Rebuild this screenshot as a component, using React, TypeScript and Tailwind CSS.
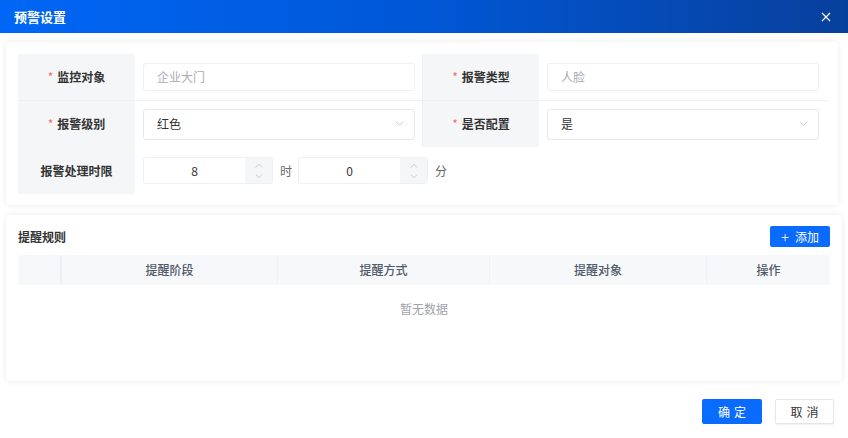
import React from 'react';

const font = { fontFamily: '"Noto Sans CJK SC", "Noto Sans", sans-serif' };

const Chevron: React.FC<{ up?: boolean; className?: string }> = ({ up, className }) => (
  <svg viewBox="0 0 10 6" className={className} fill="none" stroke="currentColor" strokeWidth="1">
    {up ? <path d="M1 5.5 L5 1.5 L9 5.5" /> : <path d="M1 0.5 L5 4.5 L9 0.5" />}
  </svg>
);

const Label: React.FC<{ text: string; required?: boolean; w?: string }> = ({ text, required, w = 'w-[117px]' }) => (
  <div className={`${w} shrink-0 h-full bg-[#f5f6f7] flex items-center justify-center text-[12px] font-bold text-[#333]`}>
    {required && <span className="text-[#f56c6c] mr-[4px] font-normal">*</span>}
    {text}
  </div>
);

const TextField: React.FC<{ value: string }> = ({ value }) => (
  <div className="w-[272px] h-[28px] border border-[#eef0f3] rounded-[3px] bg-white flex items-center pl-[13px] text-[12px] text-[#a8abb2]">
    {value}
  </div>
);

const SelectField: React.FC<{ value: string }> = ({ value }) => (
  <div className="w-[272px] h-[31px] border border-[#e6e8eb] rounded-[3px] bg-white flex items-center justify-between pl-[13px] pr-[10px] text-[12px] text-[#333]">
    <span>{value}</span>
    <Chevron className="w-[9px] h-[6px] text-[#c0c4cc]" />
  </div>
);

const NumberField: React.FC<{ value: string }> = ({ value }) => (
  <div className="flex h-[27px] border border-[#eef0f3] rounded-[3px] bg-white">
    <div className="w-[101px] flex items-center justify-center text-[12px] text-[#333]">{value}</div>
    <div className="w-[27px] bg-[#f5f6f7] flex flex-col items-center justify-center gap-[6px]">
      <Chevron up className="w-[8px] h-[5px] text-[#b8bcc4]" />
      <Chevron className="w-[8px] h-[5px] text-[#b8bcc4]" />
    </div>
  </div>
);

const App: React.FC = () => {
  return (
    <div className="w-[848px] h-[438px] bg-white flex flex-col" style={font}>
      {/* header */}
      <div className="h-[33px] shrink-0 bg-gradient-to-r from-[#0066f5] via-[#0057d6] to-[#07409c] flex items-center justify-between pl-[14px] pr-[17px]">
        <span className="text-[13px] font-bold text-white">预警设置</span>
        <svg viewBox="0 0 10 10" className="w-[10px] h-[10px]" stroke="white" strokeWidth="1.2">
          <path d="M1 1 L9 9 M9 1 L1 9" />
        </svg>
      </div>

      {/* form card */}
      <div className="mt-[9px] ml-[6px] w-[832px] h-[163px] bg-white rounded-[4px] shadow-[0_0_6px_rgba(0,0,0,0.09)] pt-[12px] pl-[12px]">
        <div className="w-[810px]">
          <div className="flex h-[47px] border-b border-[#eef0f3]">
            <div className="flex items-center w-[405px] border-r border-[#eef0f3]">
              <Label text="监控对象" required />
              <div className="px-[8px]"><TextField value="企业大门" /></div>
            </div>
            <div className="flex items-center w-[404px]">
              <Label text="报警类型" required w="w-[116px]" />
              <div className="px-[8px]"><TextField value="人脸" /></div>
            </div>
          </div>
          <div className="flex h-[46px]">
            <div className="flex items-center w-[405px] border-r border-[#eef0f3]">
              <Label text="报警级别" required />
              <div className="px-[8px]"><SelectField value="红色" /></div>
            </div>
            <div className="flex items-center w-[404px]">
              <Label text="是否配置" required w="w-[116px]" />
              <div className="px-[8px]"><SelectField value="是" /></div>
            </div>
          </div>
          <div className="flex items-center h-[47px]">
            <Label text="报警处理时限" />
            <div className="flex items-center pl-[8px] text-[12px] text-[#666]">
              <NumberField value="8" />
              <span className="ml-[7px] mr-[6px]">时</span>
              <NumberField value="0" />
              <span className="ml-[7px]">分</span>
            </div>
          </div>
        </div>
      </div>

      {/* rules card */}
      <div className="mt-[10px] ml-[6px] w-[836px] h-[166px] bg-white rounded-[4px] shadow-[0_0_6px_rgba(0,0,0,0.09)] pt-[11px] px-[12px]">
        <div className="flex items-center justify-between h-[21px]">
          <span className="text-[12px] font-bold text-[#333]">提醒规则</span>
          <button className="w-[60px] h-[21px] bg-[#0a6cff] rounded-[2px] text-white text-[12px] flex items-center justify-center gap-[6px]">
            <span className="text-[15px] leading-none font-light">+</span>
            <span>添加</span>
          </button>
        </div>
        <div className="mt-[8px]">
          <div className="flex h-[30px] bg-[#f7f8fa] text-[12px] font-medium text-[#4e5969]">
            <div className="w-[44px] border-r-2 border-[#eef0f4]" />
            <div className="w-[216px] flex items-center justify-center border-r border-[#f0f1f4]">提醒阶段</div>
            <div className="w-[212px] flex items-center justify-center border-r border-[#f0f1f4]">提醒方式</div>
            <div className="w-[217px] flex items-center justify-center border-r border-[#f0f1f4]">提醒对象</div>
            <div className="flex-1 flex items-center justify-center">操作</div>
          </div>
          <div className="h-[48px] flex items-center justify-center text-[12px] text-[#a0a3a8]">暂无数据</div>
        </div>
      </div>

      {/* footer */}
      <div className="flex justify-end gap-[13px] mt-[18px] pr-[14px]">
        <button className="w-[60px] h-[25px] bg-[#0a6cff] rounded-[2px] text-white text-[12px] tracking-[4px] pl-[4px]">确定</button>
        <button className="w-[59px] h-[25px] bg-white border border-[#e4e6ea] rounded-[2px] shadow-[0_1px_2px_rgba(0,0,0,0.06)] text-[#333] text-[12px] tracking-[4px] pl-[4px]">取消</button>
      </div>
    </div>
  );
};

export default App;
